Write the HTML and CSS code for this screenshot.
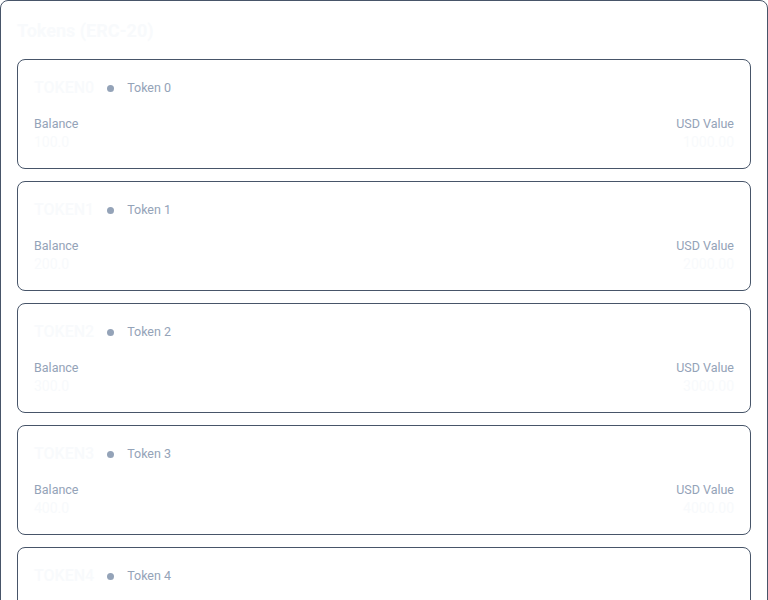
FILE: index.html
```html
<!DOCTYPE html>
<html>
<head>
<meta charset="utf-8">
<link rel="stylesheet" href="styles.css">
</head>
<body>
<div class="panel">
  <h2 class="title">Tokens (ERC-20)</h2>
  <div class="list">
    <div class="card">
      <div class="head"><span class="sym">TOKEN0</span><span class="dot"></span><span class="name">Token 0</span></div>
      <div class="stats"><div class="stat"><div class="label">Balance</div><div class="val">100.0</div></div><div class="stat right"><div class="label">USD Value</div><div class="val">1000.00</div></div></div>
    </div>
    <div class="card">
      <div class="head"><span class="sym">TOKEN1</span><span class="dot"></span><span class="name">Token 1</span></div>
      <div class="stats"><div class="stat"><div class="label">Balance</div><div class="val">200.0</div></div><div class="stat right"><div class="label">USD Value</div><div class="val">2000.00</div></div></div>
    </div>
    <div class="card">
      <div class="head"><span class="sym">TOKEN2</span><span class="dot"></span><span class="name">Token 2</span></div>
      <div class="stats"><div class="stat"><div class="label">Balance</div><div class="val">300.0</div></div><div class="stat right"><div class="label">USD Value</div><div class="val">3000.00</div></div></div>
    </div>
    <div class="card">
      <div class="head"><span class="sym">TOKEN3</span><span class="dot"></span><span class="name">Token 3</span></div>
      <div class="stats"><div class="stat"><div class="label">Balance</div><div class="val">400.0</div></div><div class="stat right"><div class="label">USD Value</div><div class="val">4000.00</div></div></div>
    </div>
    <div class="card">
      <div class="head"><span class="sym">TOKEN4</span><span class="dot"></span><span class="name">Token 4</span></div>
      <div class="stats"><div class="stat"><div class="label">Balance</div><div class="val">500.0</div></div><div class="stat right"><div class="label">USD Value</div><div class="val">5000.00</div></div></div>
    </div>
  </div>
</div>
</body>
</html>
```
FILE: styles.css
```css
html, body { margin: 0; padding: 0; background: #ffffff; }
body { font-family: Roboto, "Noto Sans", sans-serif; }
.panel {
  border: 1px solid #475569;
  border-radius: 8px;
  padding: 16px;
  min-height: 700px;
}
.title {
  margin: 0 0 14px 0;
  font-size: 18px;
  line-height: 28px;
  font-weight: 700;
  color: #f8fafc;
}
.list { display: flex; flex-direction: column; gap: 12px; }
.card {
  border: 1px solid #475569;
  border-radius: 8px;
  padding: 16px;
}
.head { display: flex; align-items: center; height: 24px; }
.sym { font-size: 16px; font-weight: 500; color: #f8fafc; line-height: 24px; }
.dot { width: 7px; height: 7px; border-radius: 50%; background: #94a3b8; margin: 0 13px; }
.name { font-size: 12.5px; color: #94a3b8; line-height: 20px; font-weight: 400; }
.stats { display: flex; justify-content: space-between; margin-top: 16px; }
.right { text-align: right; }
.label { font-size: 12.5px; line-height: 16px; color: #94a3b8; font-weight: 400; }
.val { font-size: 14px; line-height: 20px; color: #f8fafc; }
```
